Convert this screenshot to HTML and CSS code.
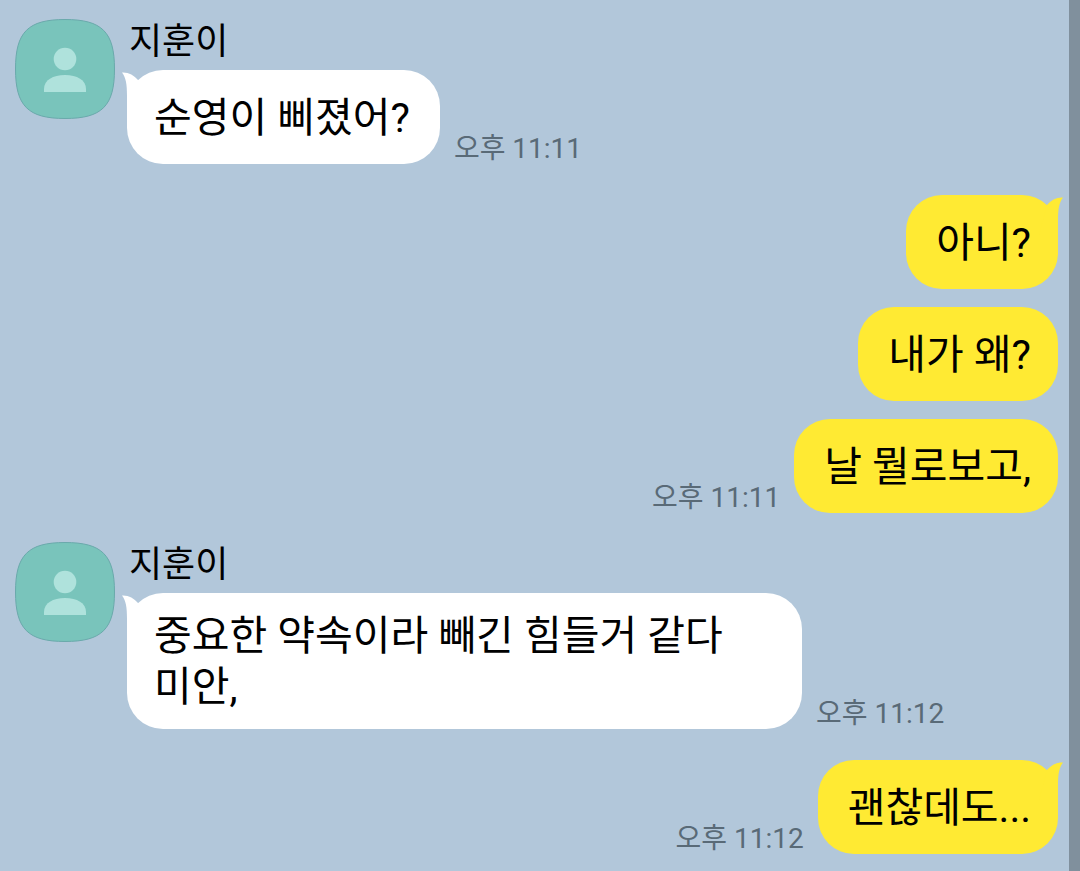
FILE: index.html
```html
<!DOCTYPE html>
<html lang="ko">
<head>
  <meta charset="UTF-8">
  <meta name="viewport" content="width=device-width, initial-scale=1.0">
  <title>지훈이</title>
  <link rel="stylesheet" href="styles.css">
</head>
<body>

  <!-- 공통 아이콘 -->
  <svg class="defs" aria-hidden="true">
    <symbol id="profile" viewBox="0 0 100 100">
      <path d="M50 0.5C87 0.5 99.5 13 99.5 50S87 99.5 50 99.5S0.5 87 0.5 50S13 0.5 50 0.5Z" fill="#79c4bb" stroke="#6aa9ab"/>
      <circle cx="50" cy="40" r="11.3" fill="#afe2dc"/>
      <path d="M29 73V70C29 61 38 56 50 56S71 61 71 70V73Z" fill="#afe2dc"/>
    </symbol>
    <symbol id="tail" viewBox="0 0 40 40">
      <path d="M0 2.5C6 2 12 5 16 10L24 40H5V26C5 14 4 8 0 2.5Z"/>
    </symbol>
  </svg>

  <main class="chat">
    <section class="group">
      <svg class="avatar" role="img" aria-label="지훈이 프로필"><use href="#profile"/></svg>
      <div class="content">
        <div class="name">지훈이</div>
        <div class="row">
          <div class="bubble">
            <svg class="tail" aria-hidden="true"><use href="#tail"/></svg>
            <p>순영이 삐졌어?</p>
          </div>
          <time class="time">오후 11:11</time>
        </div>
      </div>
    </section>

    <section class="group mine">
      <div class="row">
        <div class="bubble">
          <svg class="tail" aria-hidden="true"><use href="#tail"/></svg>
          <p>아니?</p>
        </div>
      </div>
      <div class="row">
        <div class="bubble"><p>내가 왜?</p></div>
      </div>
      <div class="row">
        <time class="time">오후 11:11</time>
        <div class="bubble"><p>날 뭘로보고,</p></div>
      </div>
    </section>

    <section class="group">
      <svg class="avatar" role="img" aria-label="지훈이 프로필"><use href="#profile"/></svg>
      <div class="content">
        <div class="name">지훈이</div>
        <div class="row">
          <div class="bubble">
            <svg class="tail" aria-hidden="true"><use href="#tail"/></svg>
            <p>중요한 약속이라 빼긴 힘들거 같다 미안,</p>
          </div>
          <time class="time">오후 11:12</time>
        </div>
      </div>
    </section>

    <section class="group mine">
      <div class="row">
        <time class="time">오후 11:12</time>
        <div class="bubble">
          <svg class="tail" aria-hidden="true"><use href="#tail"/></svg>
          <p>괜찮데도...</p>
        </div>
      </div>
    </section>
  </main>

</body>
</html>
```
FILE: styles.css
```css
* {
  box-sizing: border-box;
}

body {
  margin: 0;
  min-height: 100vh;
  background-color: #b2c7da;
  border-right: 11px solid #80909d;
  font-family: Roboto, "Noto Sans CJK KR", sans-serif;
  color: #000;
}

.defs {
  position: absolute;
  width: 0;
  height: 0;
}

.chat {
  display: flex;
  flex-direction: column;
  gap: 29px;
  padding: 19px 11px 17px 15px;
}

.group {
  display: flex;
  align-items: flex-start;
  gap: 12px;
}

.content {
  flex: 1;
  min-width: 0;
}

.avatar {
  flex: none;
  width: 100px;
  height: 100px;
}

.name {
  margin-bottom: 5px;
  padding-left: 2px;
  font-size: 36px;
  line-height: 46px;
}

.row {
  display: flex;
  align-items: flex-end;
  gap: 14px;
}

.bubble {
  position: relative;
  display: flex;
  align-items: center;
  min-height: 94px;
  max-width: 675px;
  padding: 18px 30px 16px 27px;
  border-radius: 36px;
  background-color: #fff;
  color: #fff;
}

.bubble p {
  margin: 0;
  font-size: 41px;
  line-height: 51px;
  color: #000;
  word-break: keep-all;
}

.time {
  flex: none;
  font-size: 28px;
  line-height: 30px;
  color: #596a77;
}

/* 말풍선 꼬리 */
.tail {
  position: absolute;
  top: 0;
  left: -5px;
  width: 40px;
  height: 40px;
  fill: currentColor;
}

/* 내가 보낸 메시지 */
.mine {
  flex-direction: column;
  align-items: flex-end;
  gap: 18px;
  margin-top: 2px;
}

.mine .bubble {
  padding-right: 27px;
  padding-left: 30px;
  background-color: #ffea33;
  color: #ffea33;
}

.mine .tail {
  left: auto;
  right: -5px;
  transform: scaleX(-1);
}
```
